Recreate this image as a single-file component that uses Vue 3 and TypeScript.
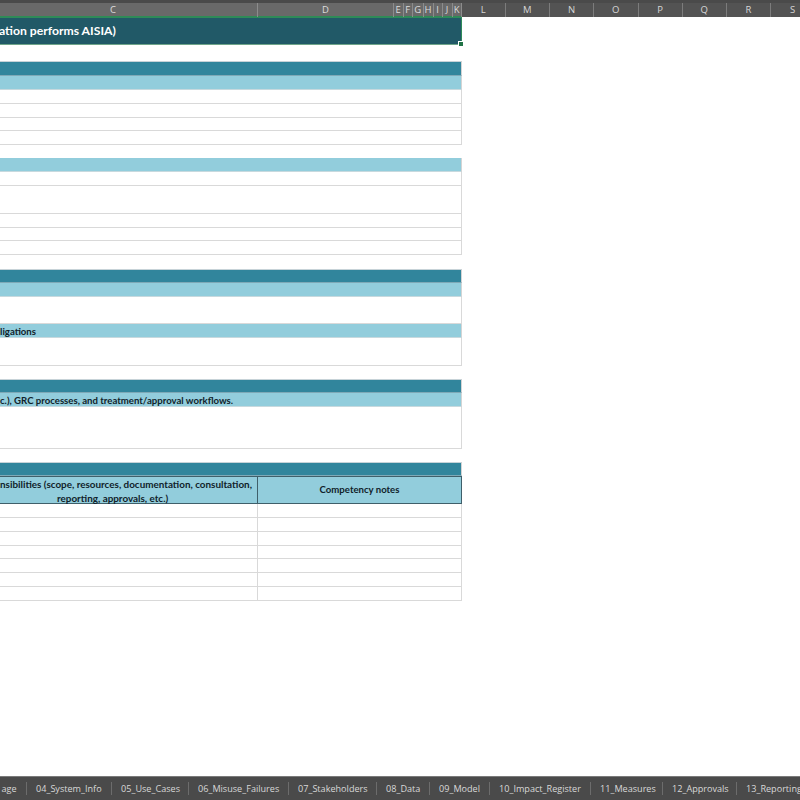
<script setup lang="ts">
interface Col { label: string; width: number; selected: boolean }
interface Tab { label: string; width: number }

const cols: Col[] = [
  { label: 'C', width: 258, selected: true },
  { label: 'D', width: 136, selected: true },
  { label: 'E', width: 9.5, selected: true },
  { label: 'F', width: 9.5, selected: true },
  { label: 'G', width: 10.5, selected: true },
  { label: 'H', width: 10, selected: true },
  { label: 'I', width: 9, selected: true },
  { label: 'J', width: 10, selected: true },
  { label: 'K', width: 9.5, selected: true },
  { label: 'L', width: 43.5, selected: false },
  { label: 'M', width: 44.5, selected: false },
  { label: 'N', width: 44, selected: false },
  { label: 'O', width: 44.5, selected: false },
  { label: 'P', width: 44, selected: false },
  { label: 'Q', width: 44.5, selected: false },
  { label: 'R', width: 44, selected: false },
  { label: 'S', width: 44, selected: false },
]

const tabs: Tab[] = [
  { label: '04_System_Info', width: 85 },
  { label: '05_Use_Cases', width: 77 },
  { label: '06_Misuse_Failures', width: 100 },
  { label: '07_Stakeholders', width: 88 },
  { label: '08_Data', width: 53 },
  { label: '09_Model', width: 60 },
  { label: '10_Impact_Register', width: 101 },
  { label: '11_Measures', width: 72 },
  { label: '12_Approvals', width: 74 },
  { label: '13_Reporting', width: 90 },
]

const roleRows: number[] = [14, 14, 14, 13, 14, 14, 14]
</script>

<template>
  <div class="app">
    <div class="top-strip"></div>
    <div class="col-head">
      <div
        v-for="c in cols"
        :key="c.label"
        class="col"
        :class="{ selected: c.selected }"
        :style="{ width: c.width + 'px' }"
      >{{ c.label }}</div>
    </div>

    <main class="sheet">
      <div class="title">
        <span class="title-text">ation performs AISIA)</span>
        <span class="handle"></span>
      </div>

      <section class="block gap-16">
        <div class="band band-tall"></div>
        <div class="light"></div>
        <div class="row h14"></div>
        <div class="row h14"></div>
        <div class="row h13"></div>
        <div class="row h14"></div>
      </section>

      <section class="block gap-13">
        <div class="light"></div>
        <div class="row h14"></div>
        <div class="row h28"></div>
        <div class="row h14"></div>
        <div class="row h13"></div>
        <div class="row h14"></div>
      </section>

      <section class="block gap-14">
        <div class="band"></div>
        <div class="light"></div>
        <div class="row h27"></div>
        <div class="light">ligations</div>
        <div class="row h28"></div>
      </section>

      <section class="block gap-13">
        <div class="band"></div>
        <div class="light">c.), GRC processes, and treatment/approval workflows.</div>
        <div class="row h42"></div>
      </section>

      <section class="block gap-13">
        <div class="band"></div>
        <div class="role-head">
          <div class="role-a">
            <span class="line-a">nsibilities (scope, resources, documentation, consultation,</span>
            <span class="line-b">reporting, approvals, etc.)</span>
          </div>
          <div class="role-b">Competency notes</div>
        </div>
        <div
          v-for="(h, i) in roleRows"
          :key="i"
          class="role-row"
          :style="{ height: h + 'px' }"
        >
          <div class="role-cell"></div>
          <div class="role-cell"></div>
        </div>
      </section>
    </main>

    <footer class="tabs">
      <div class="tab tab-first">age</div>
      <div
        v-for="t in tabs"
        :key="t.label"
        class="tab"
        :style="{ width: t.width + 'px' }"
      >{{ t.label }}</div>
    </footer>
  </div>
</template>

<style>
html, body { margin: 0; background: #fff; }
</style>

<style scoped>
.app {
  width: 800px;
  height: 800px;
  overflow: hidden;
  display: flex;
  flex-direction: column;
  background: #fff;
  font-family: Lato, "Liberation Sans", sans-serif;
}
.top-strip { height: 3px; background: #4a4a4a; flex: none; }
.col-head {
  height: 14px;
  flex: none;
  display: flex;
  background: #535353;
}
.col {
  flex: none;
  box-sizing: border-box;
  text-align: center;
  color: #d6d6d6;
  font-size: 9.5px;
  line-height: 14px;
  border-right: 1px solid #7c7c7c;
  font-family: "Open Sans", "Liberation Sans", sans-serif;
}
.col:first-child { padding-right: 31px; }
.col.selected {
  background: #696969;
  border-right-color: #8c8c8c;
  box-shadow: inset 0 -1px 0 #2e8b57;
  color: #dcdcdc;
}
.sheet {
  flex: 1;
  width: 462px;
  box-sizing: border-box;
  min-height: 0;
}
.title {
  position: relative;
  height: 28px;
  box-sizing: border-box;
  background: #215967;
  border: 1px solid #2f8a5a;
  border-left: 0;
  border-bottom-color: #6fa58a;
  color: #fff;
  font-weight: 700;
  font-size: 12.2px;
  line-height: 26px;
}
.title-text { margin-left: -1px; }
.handle {
  position: absolute;
  right: -2px;
  bottom: -2px;
  width: 4px;
  height: 4px;
  background: #217346;
  border: 1px solid #fff;
  box-sizing: content-box;
  transform: translate(1px, 1px);
}
.block { width: 462px; box-sizing: border-box; }
.gap-16 { margin-top: 16px; }
.gap-13 { margin-top: 13px; }
.gap-14 { margin-top: 14px; }
.band {
  height: 14px;
  box-sizing: border-box;
  background: #31859c;
  border-bottom: 1px solid #7ea9b7;
  border-top: 1px solid #c7d3d8;
  border-right: 1px solid #d4d4d4;
}
.band-tall { height: 15px; }
.light {
  height: 14px;
  box-sizing: border-box;
  background: #92cddc;
  border-bottom: 1px solid #c7d9de;
  border-right: 1px solid #d4d4d4;
  color: #10222a;
  font-weight: 700;
  font-size: 9.6px;
  line-height: 15px;
  white-space: nowrap;
}
.row {
  box-sizing: border-box;
  border-bottom: 1px solid #d9d9d9;
  border-right: 1px solid #d9d9d9;
}
.h13 { height: 13px; }
.h14 { height: 14px; }
.h27 { height: 27px; }
.h28 { height: 28px; }
.h42 { height: 42px; }
.role-head {
  height: 28px;
  display: flex;
  box-sizing: border-box;
  background: #92cddc;
  color: #10222a;
  font-weight: 700;
  font-size: 9.6px;
  line-height: 14px;
  border-top: 1px solid #3f5f6a;
  border-bottom: 1px solid #3f5f6a;
  border-right: 1px solid #3f5f6a;
}
.role-a {
  width: 258px;
  box-sizing: border-box;
  border-right: 1px solid #3f5f6a;
  display: flex;
  flex-direction: column;
  white-space: nowrap;
  font-size: 9.9px;
}
.line-a { text-align: right; padding-right: 9px; }
.line-b { padding-left: 57px; }
.role-b {
  flex: 1;
  text-align: center;
  line-height: 26px;
}
.role-row {
  display: flex;
  box-sizing: border-box;
  border-bottom: 1px solid #d9d9d9;
  border-right: 1px solid #d9d9d9;
}
.role-cell:first-child {
  width: 258px;
  box-sizing: border-box;
  border-right: 1px solid #d9d9d9;
}
.role-cell:last-child { flex: 1; }
.tabs {
  height: 24px;
  flex: none;
  display: flex;
  background: #4a4a4a;
  border-top: 1px solid #7a7a7a;
  box-sizing: border-box;
  align-items: center;
  color: #d8d8d8;
  font-family: "Open Sans", "Liberation Sans", sans-serif;
  font-size: 9.1px;
  white-space: nowrap;
  overflow: hidden;
}
.tab {
  flex: none;
  box-sizing: border-box;
  height: 13px;
  line-height: 13px;
  padding-left: 9.5px;
  border-right: 1px solid #6c6c6c;
}
.tab:last-child { border-right: 0; }
.tab-first {
  width: 26.5px;
  padding-left: 0;
  text-align: right;
  padding-right: 9px;
}
</style>
